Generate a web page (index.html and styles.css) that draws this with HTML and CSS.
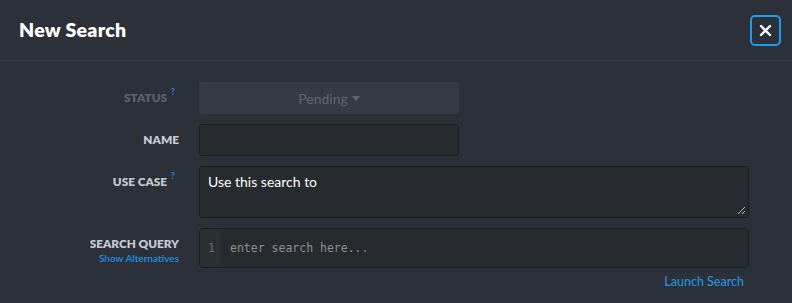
FILE: index.html
```html
<!DOCTYPE html>
<html>
<head>
<meta charset="utf-8">
<link rel="stylesheet" href="styles.css">
</head>
<body>
<div class="modal">
  <header class="head">
    <h1 class="title">New Search</h1>
    <button class="close" aria-label="Close">
      <svg width="13" height="13" viewBox="0 0 13 13"><path d="M2 2 L11 11 M11 2 L2 11" stroke="#fff" stroke-width="2.4" stroke-linecap="round"/></svg>
    </button>
  </header>
  <div class="form">
    <div class="row">
      <div class="label dim">STATUS<sup class="q">?</sup></div>
      <div class="field"><div class="select">Pending <span class="caret"></span></div></div>
    </div>
    <div class="row">
      <div class="label">NAME</div>
      <div class="field"><div class="input"></div></div>
    </div>
    <div class="row">
      <div class="label">USE CASE<sup class="q">?</sup></div>
      <div class="field wide"><div class="textarea">Use this search to
        <svg class="grip" width="9" height="9" viewBox="0 0 9 9"><path d="M8 1 L1 8 M8 5 L5 8" stroke="#bbb" stroke-width="1"/></svg>
      </div></div>
    </div>
    <div class="row">
      <div class="label">SEARCH QUERY<a class="alt">Show Alternatives</a></div>
      <div class="field wide">
        <div class="code"><div class="gutter">1</div><div class="codetext">enter search here...</div></div>
        <div class="launch-row"><a class="launch">Launch Search</a></div>
      </div>
    </div>
  </div>
</div>
</body>
</html>
```
FILE: styles.css
```css
html, body { margin: 0; padding: 0; }
body {
  background: #2c3039;
  font-family: Lato, "Open Sans", "Liberation Sans", sans-serif;
  width: 792px;
  height: 303px;
  overflow: hidden;
}
.head {
  height: 61px;
  border-bottom: 1px solid #343943;
  display: flex;
  align-items: center;
  justify-content: space-between;
  padding: 0 11px 0 19px;
  box-sizing: border-box;
}
.title {
  margin: 0;
  color: #fff;
  font-size: 19.5px;
  font-weight: 800;
  letter-spacing: 0.3px;
  padding-bottom: 2px;
}
.close {
  width: 31px;
  height: 31px;
  border: 2px solid #1e9bf0;
  border-radius: 5px;
  background: transparent;
  padding: 0;
  display: flex;
  align-items: center;
  justify-content: center;
  margin-top: 1px;
}
.form {
  padding-top: 21px;
  display: flex;
  flex-direction: column;
  gap: 10px;
}
.row { display: flex; gap: 20px; }
.label {
  display: block;
  width: 179px;
  box-sizing: border-box;
  text-align: right;
  color: #c6cad1;
  font-size: 11.8px;
  font-weight: 800;
  padding-top: 8px;
  line-height: 16px;
}
.label.dim { color: #5c636e; }
.q {
  color: #1f8fe0;
  font-size: 8.5px;
  font-weight: 700;
  position: relative;
  top: -2px;
  margin-left: 4px;
  margin-right: 4px;
  vertical-align: top;
  line-height: 8px;
}
.alt {
  display: block;
  color: #2190e0;
  font-size: 10px;
  font-weight: 600;
  line-height: 12px;
  margin-top: 0px;
}
.field { width: 260px; }
.field.wide { width: 550px; }
.select {
  height: 32px;
  background: #363a42;
  border-radius: 3px;
  color: #5f6672;
  font-size: 14px;
  display: flex;
  align-items: center;
  justify-content: center;
  gap: 4px;
}
.caret {
  width: 0; height: 0;
  border-left: 4px solid transparent;
  border-right: 4px solid transparent;
  border-top: 5px solid #5f6672;
  margin-top: 1px;
}
.input {
  height: 32px;
  box-sizing: border-box;
  background: #272a2e;
  border: 1px solid #1c1e21;
  border-radius: 3px;
}
.textarea {
  position: relative;
  height: 52px;
  box-sizing: border-box;
  background: #272a2e;
  border: 1px solid #1c1e21;
  border-radius: 3px;
  color: #fff;
  font-size: 14px;
  padding: 6px 8px;
  line-height: 18px;
}
.grip { position: absolute; right: 2px; bottom: 2px; }
.code {
  height: 40px;
  box-sizing: border-box;
  background: #272a2e;
  border: 1px solid #1c1e21;
  border-radius: 4px;
  display: flex;
  overflow: hidden;
  font-family: "DejaVu Sans Mono", "Liberation Mono", monospace;
  font-size: 11.5px;
  line-height: 38px;
}
.gutter {
  width: 21px;
  background: #2b2e32;
  color: #6b6f74;
  box-sizing: border-box;
  padding-left: 8px;
}
.codetext { color: #8d9094; padding-left: 9px; }
.launch-row {
  display: flex;
  justify-content: flex-end;
  padding-right: 5px;
  padding-top: 6px;
}
.launch {
  color: #2494e2;
  font-size: 12.5px;
  font-weight: 500;
}
```
